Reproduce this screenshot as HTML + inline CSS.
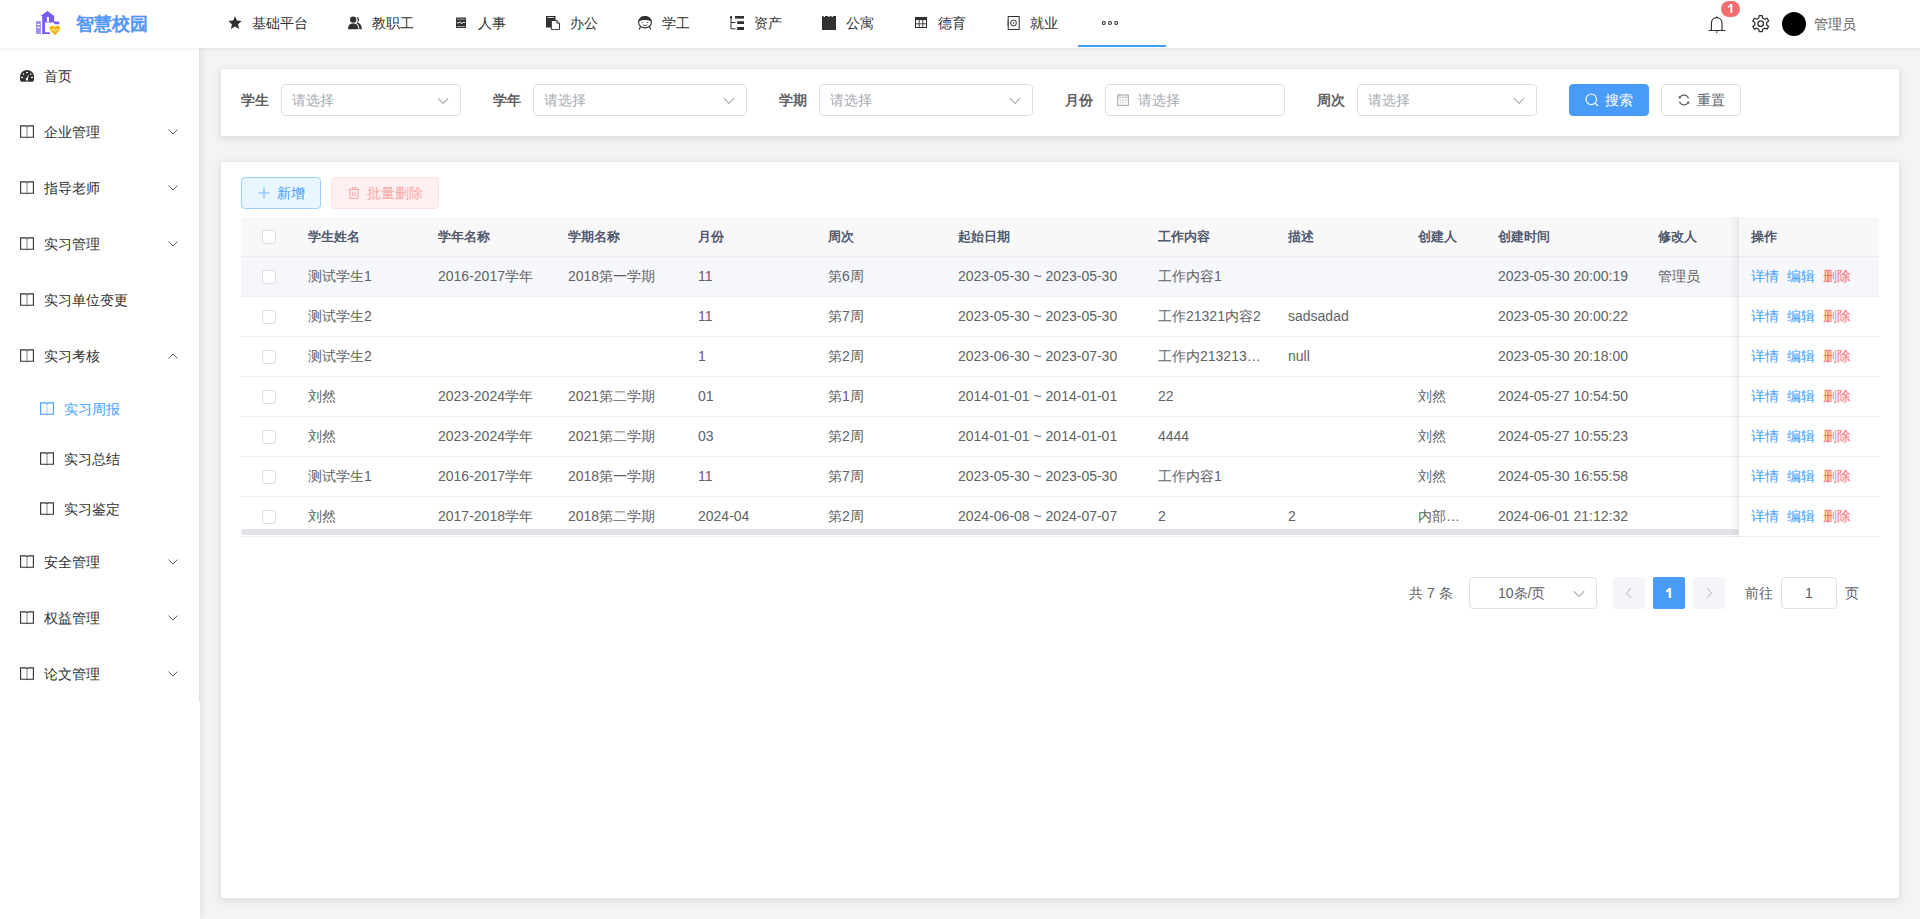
<!DOCTYPE html>
<html><head><meta charset="utf-8">
<style>
*{box-sizing:border-box;margin:0;padding:0}
html,body{width:1920px;height:919px;overflow:hidden}
body{font-family:"Liberation Sans",sans-serif;font-size:14px;color:#606266;background:#f4f4f4;position:relative}
.abs{position:absolute}
#header{left:0;top:0;width:1920px;height:48px;background:#fff;box-shadow:0 1px 4px rgba(0,21,41,.08);z-index:3}
#side{left:0;top:48px;width:200px;height:871px;background:#fff;box-shadow:2px 0 6px rgba(0,21,41,.08);z-index:2}
#menu{left:0;top:0;width:200px;height:654px;border-right:1px solid #dfe2e8}
.mi{position:absolute;left:0;width:199px;height:56px;line-height:56px;color:#303133}
.mi .t{position:absolute;left:44px;top:0}
.mi svg{position:absolute}
.card{position:absolute;background:#fff;border-radius:2px;border:1px solid #e3e6eb;box-shadow:0 2px 8px 0 rgba(0,0,0,.11)}
.lbl{position:absolute;top:84px;height:32px;line-height:32px;font-weight:bold;color:#606266}
.inp{position:absolute;top:84px;height:32px;border:1px solid #dcdfe6;border-radius:4px;background:#fff;color:#a8abb2;line-height:30px}
.btn{position:absolute;height:32px;border-radius:4px;line-height:30px;border:1px solid #dcdfe6}
.nav{position:absolute;top:0;height:48px;line-height:46px;color:#303133}
.nav svg{position:absolute;left:0;top:16px}
.nav .t{position:absolute;left:24px;top:0;white-space:nowrap}
table{border-collapse:collapse;table-layout:fixed}
.th,.td{position:absolute;white-space:nowrap;overflow:hidden}
</style></head><body>

<div id="header" class="abs">
 <svg class="abs" style="left:36px;top:11px" width="24" height="24" viewBox="0 0 24 24">
  <rect x="0" y="10.1" width="4.9" height="12.8" fill="#a18ef6"/>
  <rect x="1" y="13" width="3" height="1" fill="#fff"/><rect x="1" y="16" width="3" height="1" fill="#fff"/>
  <path d="M4.6 5.1 L11.4 0 L18.2 5.1 L18.2 10.4 L23.2 10.4 L23.2 13.2 L18.2 13.2 L18.2 11.4 L9 11.4 L9 21.3 L14 21.3 L14 22.9 L6.2 22.9 L6.2 5.1 Z" fill="#7a5af0"/>
  <rect x="10.9" y="5.7" width="2.1" height="5.2" rx="1" fill="#fff"/>
  <path d="M18.85 24.2 L14.2 19.6 C13 18.3 13.1 15.6 15.1 14.9 C16.7 14.3 18.2 15.1 18.85 16.1 C19.5 15.1 21 14.3 22.6 14.9 C24.6 15.6 24.7 18.3 23.5 19.6 Z" fill="#f8b305"/>
  <path d="M14 18.8 L16.6 18.8 L17.5 17.5 L18.8 20.2 L19.9 18.8 L23.8 18.8" stroke="#fff" stroke-width=".75" fill="none"/>
 </svg>
 <div class="abs" style="left:76px;top:0;height:48px;line-height:49px;font-size:18px;font-weight:bold;color:#4c9bf8;text-shadow:0 0 1px rgba(230,120,255,.45)">智慧校园</div>

 <div class="nav" style="left:228px"><svg width="14" height="14" viewBox="0 0 14 14"><path d="M7 0.3 L8.9 4.6 L13.6 5.1 L10.1 8.3 L11.1 13 L7 10.6 L2.9 13 L3.9 8.3 L0.4 5.1 L5.1 4.6 Z" fill="#303133"/></svg><span class="t">基础平台</span></div>
 <div class="nav" style="left:348px"><svg width="14" height="14" viewBox="0 0 14 14"><circle cx="5.2" cy="3.6" r="3.2" fill="#303133"/><path d="M0 13.3 C0 9 2 7.4 5.2 7.4 C8.4 7.4 10.4 9 10.4 13.3 Z" fill="#303133"/><path d="M8.6 0.9 C10.4 0.9 11.4 2.3 11.1 4.1 C10.9 5.4 10.2 6.2 9.4 6.6 C12 7.4 13.6 9.2 13.9 13.3 L11.4 13.3 C11.3 10.2 10.4 8.3 8.6 7.3 C9.5 6.3 9.9 5 9.8 3.6 C9.7 2.4 9.2 1.5 8.6 0.9 Z" fill="#303133"/></svg><span class="t">教职工</span></div>
 <div class="nav" style="left:454px"><svg width="14" height="14" viewBox="0 0 14 14"><rect x="2" y="1.5" width="10" height="10.5" fill="#303133"/><rect x="2.8" y="2.7" width="8.4" height=".8" fill="#fff" opacity=".7"/><rect x="2.8" y="10.2" width="8.4" height=".8" fill="#fff" opacity=".7"/><path d="M2.8 6.9 L5 6.9 L6.2 5.6 L7.6 7.9 L8.8 6.4 L11.2 6.4" stroke="#fff" stroke-width=".9" fill="none"/></svg><span class="t">人事</span></div>
 <div class="nav" style="left:546px"><svg width="14" height="14" viewBox="0 0 14 14"><rect x="0" y="0" width="9.5" height="11.5" fill="#303133"/><rect x="1.5" y="1" width="6.3" height="1" fill="#fff" opacity=".8"/><path d="M5.3 4.5 L10.8 4.5 L13.5 7.2 L13.5 13.6 L5.3 13.6 Z" fill="#fff" stroke="#303133" stroke-width="1"/><path d="M10.8 4.5 L10.8 7.2 L13.5 7.2" fill="none" stroke="#303133" stroke-width=".9"/></svg><span class="t">办公</span></div>
 <div class="nav" style="left:638px"><svg width="14" height="14" viewBox="0 0 14 14"><ellipse cx="7" cy="6.2" rx="6.4" ry="5.7" fill="none" stroke="#303133" stroke-width="1.1"/><path d="M0.7 5.6 C1.2 1.8 4 0.5 7 0.5 C10 0.5 12.8 1.8 13.3 5.6 C11 3.4 3 3.4 0.7 5.6 Z" fill="#303133"/><circle cx="4.2" cy="6.5" r=".6" fill="#303133"/><circle cx="9.8" cy="6.5" r=".6" fill="#303133"/><path d="M4.8 8.6 C6 9.8 8 9.8 9.2 8.6" fill="none" stroke="#303133" stroke-width=".8"/><path d="M2.6 10.6 L1.2 13.6 M11.4 10.6 L12.8 13.6" stroke="#303133" stroke-width="1.1"/></svg><span class="t">学工</span></div>
 <div class="nav" style="left:730px"><svg width="14" height="14" viewBox="0 0 14 14"><rect x="0" y="0" width="2" height="2.8" rx=".8" fill="#303133"/><path d="M1 2.5 L1 12.8 L5.5 12.8 M1 6.5 L5.5 6.5" fill="none" stroke="#303133" stroke-width="1"/><rect x="5" y="0" width="9" height="2.6" fill="#303133"/><rect x="7.2" y="5.2" width="6.8" height="2.8" fill="#303133"/><rect x="7.2" y="11" width="6.8" height="3" fill="#303133"/></svg><span class="t">资产</span></div>
 <div class="nav" style="left:822px"><svg width="14" height="14" viewBox="0 0 14 14"><path d="M0 0 L1.6 0 L1.6 1 L3 1 L3 0 L6.2 0 L6.2 1 L7.6 1 L7.6 0 L9.6 0 L9.6 1 L11 1 L11 0 L14 0 L14 14 L0 14 Z" fill="#303133"/></svg><span class="t">公寓</span></div>
 <div class="nav" style="left:915px"><svg width="12" height="12" viewBox="0 0 12 12" style="top:17px"><rect x=".5" y=".5" width="11" height="10" fill="none" stroke="#303133" stroke-width="1"/><rect x=".5" y=".5" width="11" height="2.6" fill="#303133"/><path d="M4.2 3 L4.2 10.5 M7.8 3 L7.8 10.5 M.5 6.8 L11.5 6.8" stroke="#303133" stroke-width=".9"/></svg><span class="t" style="left:23px">德育</span></div>
 <div class="nav" style="left:1007px"><svg width="13" height="14" viewBox="0 0 13 14"><rect x="1.2" y=".5" width="11" height="13" fill="none" stroke="#303133" stroke-width="1"/><circle cx="6.5" cy="7" r="2.9" fill="none" stroke="#303133" stroke-width="1"/><circle cx="6.5" cy="7" r=".8" fill="#303133"/><path d="M0 5 L2 5 M0 7 L2 7 M0 9 L2 9" stroke="#303133" stroke-width=".7"/></svg><span class="t" style="left:23px">就业</span></div>
 <div class="abs" style="left:1078px;top:45px;width:88px;height:2px;background:#409eff"></div>
 <svg class="abs" style="left:1101px;top:20px" width="18" height="6" viewBox="0 0 18 6"><circle cx="2.8" cy="3" r="1.45" fill="none" stroke="#303133" stroke-width="1.1"/><circle cx="9" cy="3" r="1.45" fill="none" stroke="#303133" stroke-width="1.1"/><circle cx="15.2" cy="3" r="1.45" fill="none" stroke="#303133" stroke-width="1.1"/></svg>

 <svg class="abs" style="left:1707px;top:15px" width="20" height="20" viewBox="0 0 20 20"><path d="M1.5 15.4 Q1.5 14.9 2.2 14.9 L17.8 14.9 Q18.5 14.9 18.5 15.4 Q18.5 15.9 17.8 15.9 L2.2 15.9 Q1.5 15.9 1.5 15.4 Z" fill="#303133"/><path d="M4.4 15 L4.4 8.6 C4.4 4.8 6.8 2.6 9.7 2.6 C12.6 2.6 15 4.8 15 8.6 L15 15" fill="none" stroke="#303133" stroke-width="1.15"/><path d="M8.6 2.8 L9.7 1 L10.8 2.8 Z" fill="#303133"/><path d="M8.3 16.4 L11.1 16.4 L9.7 18.6 Z" fill="#606266"/></svg>
 <div class="abs" style="left:1721px;top:1px;width:19px;height:16px;border-radius:8px;background:#f56c6c"><svg class="abs" style="left:0;top:0" width="19" height="16" viewBox="0 0 19 16"><path d="M9.2 2.9 L11.3 2.9 L11.3 12.1 L9.4 12.1 L9.4 5.6 Q8.3 6.5 6.9 6.9 L6.9 5.2 Q8.5 4.5 9.2 2.9 Z" fill="#fff"/></svg></div>
 <svg class="abs" style="left:1750px;top:12.5px" width="21.4" height="21.4" viewBox="0 0 20 20"><path d="M8.6 1.8 L11.4 1.8 L11.9 4.2 L13.6 5.1 L15.9 4.2 L17.4 6.7 L15.5 8.3 L15.5 10.3 L17.4 11.9 L15.9 14.4 L13.6 13.5 L11.9 14.5 L11.4 16.8 L8.6 16.8 L8.1 14.5 L6.4 13.5 L4.1 14.4 L2.6 11.9 L4.5 10.3 L4.5 8.3 L2.6 6.7 L4.1 4.2 L6.4 5.1 L8.1 4.2 Z" transform="translate(0 .7)" fill="none" stroke="#303133" stroke-width="1.2" stroke-linejoin="round"/><circle cx="10" cy="10" r="2.6" fill="none" stroke="#303133" stroke-width="1.2"/></svg>
 <div class="abs" style="left:1782px;top:12px;width:24px;height:24px;border-radius:50%;background:#000"></div>
 <div class="abs" style="left:1814px;top:1px;height:48px;line-height:47px;color:#606266">管理员</div>
</div>

<div id="side" class="abs">
 <div id="menu" class="abs">
<div class="mi" style="top:0"><svg width="14" height="12" viewBox="0 0 14 12" style="left:20px;top:22px"><path d="M0 7 C0 3.1 3.1 0 7 0 C10.9 0 14 3.1 14 7 L14 9.6 Q14 11.8 12.2 11.8 L1.8 11.8 Q0 11.8 0 9.6 Z" fill="#303133"/><rect x="6.1" y="2" width="1.9" height="1.1" fill="#fff"/><ellipse cx="3.5" cy="4" rx=".7" ry=".85" fill="#fff"/><ellipse cx="10.7" cy="4" rx=".7" ry=".85" fill="#fff"/><rect x="1.1" y="6.9" width="2" height="1.2" fill="#fff"/><rect x="11" y="6.9" width="2" height="1.2" fill="#fff"/><circle cx="6.9" cy="9.1" r="1.2" fill="#fff"/><path d="M6.3 8.6 L9.1 4.1 L7.7 9.3 Z" fill="#fff"/><rect x="6.2" y="10.2" width="1.4" height="1.6" fill="#fff" opacity=".6"/></svg><span class="t">首页</span></div>
<div class="mi" style="top:56px"><svg width="16" height="16" viewBox="0 0 16 16" style="left:19px;top:20px"><path d="M1.6 5.1 L6.9 5.1 L8 5.9 L9.1 5.1 L14.4 5.1 L14.4 16.5 L1.6 16.5 Z" transform="translate(0 -3.2)" fill="none" stroke="#303133" stroke-width="1.1" stroke-linejoin="miter"/><path d="M8 2.8 L8 13.3" stroke="#909399" stroke-width="1.1"/><path d="M7 13.2 L8 14.6 L9 13.2 Z" fill="#303133"/></svg><span class="t">企业管理</span><svg width="10" height="6" viewBox="0 0 10 6" style="left:168px;top:25px"><path d="M.5 .5 L5 5 L9.5 .5" fill="none" stroke="#606266" stroke-width="1"/></svg></div>
<div class="mi" style="top:112px"><svg width="16" height="16" viewBox="0 0 16 16" style="left:19px;top:20px"><path d="M1.6 5.1 L6.9 5.1 L8 5.9 L9.1 5.1 L14.4 5.1 L14.4 16.5 L1.6 16.5 Z" transform="translate(0 -3.2)" fill="none" stroke="#303133" stroke-width="1.1" stroke-linejoin="miter"/><path d="M8 2.8 L8 13.3" stroke="#909399" stroke-width="1.1"/><path d="M7 13.2 L8 14.6 L9 13.2 Z" fill="#303133"/></svg><span class="t">指导老师</span><svg width="10" height="6" viewBox="0 0 10 6" style="left:168px;top:25px"><path d="M.5 .5 L5 5 L9.5 .5" fill="none" stroke="#606266" stroke-width="1"/></svg></div>
<div class="mi" style="top:168px"><svg width="16" height="16" viewBox="0 0 16 16" style="left:19px;top:20px"><path d="M1.6 5.1 L6.9 5.1 L8 5.9 L9.1 5.1 L14.4 5.1 L14.4 16.5 L1.6 16.5 Z" transform="translate(0 -3.2)" fill="none" stroke="#303133" stroke-width="1.1" stroke-linejoin="miter"/><path d="M8 2.8 L8 13.3" stroke="#909399" stroke-width="1.1"/><path d="M7 13.2 L8 14.6 L9 13.2 Z" fill="#303133"/></svg><span class="t">实习管理</span><svg width="10" height="6" viewBox="0 0 10 6" style="left:168px;top:25px"><path d="M.5 .5 L5 5 L9.5 .5" fill="none" stroke="#606266" stroke-width="1"/></svg></div>
<div class="mi" style="top:224px"><svg width="16" height="16" viewBox="0 0 16 16" style="left:19px;top:20px"><path d="M1.6 5.1 L6.9 5.1 L8 5.9 L9.1 5.1 L14.4 5.1 L14.4 16.5 L1.6 16.5 Z" transform="translate(0 -3.2)" fill="none" stroke="#303133" stroke-width="1.1" stroke-linejoin="miter"/><path d="M8 2.8 L8 13.3" stroke="#909399" stroke-width="1.1"/><path d="M7 13.2 L8 14.6 L9 13.2 Z" fill="#303133"/></svg><span class="t">实习单位变更</span></div>
<div class="mi" style="top:280px"><svg width="16" height="16" viewBox="0 0 16 16" style="left:19px;top:20px"><path d="M1.6 5.1 L6.9 5.1 L8 5.9 L9.1 5.1 L14.4 5.1 L14.4 16.5 L1.6 16.5 Z" transform="translate(0 -3.2)" fill="none" stroke="#303133" stroke-width="1.1" stroke-linejoin="miter"/><path d="M8 2.8 L8 13.3" stroke="#909399" stroke-width="1.1"/><path d="M7 13.2 L8 14.6 L9 13.2 Z" fill="#303133"/></svg><span class="t">实习考核</span><svg width="10" height="6" viewBox="0 0 10 6" style="left:168px;top:25px"><path d="M.5 5.5 L5 1 L9.5 5.5" fill="none" stroke="#606266" stroke-width="1"/></svg></div>
<div class="mi" style="top:336px;height:50px;line-height:50px;color:#409eff"><svg width="16" height="16" viewBox="0 0 16 16" style="left:39px;top:17px"><path d="M1.6 5.1 L6.9 5.1 L8 5.9 L9.1 5.1 L14.4 5.1 L14.4 16.5 L1.6 16.5 Z" transform="translate(0 -3.2)" fill="none" stroke="#409eff" stroke-width="1.1" stroke-linejoin="miter"/><path d="M8 2.8 L8 13.3" stroke="#a0cfff" stroke-width="1.1"/><path d="M7 13.2 L8 14.6 L9 13.2 Z" fill="#409eff"/></svg><span class="t" style="left:64px">实习周报</span></div>
<div class="mi" style="top:386px;height:50px;line-height:50px;color:#303133"><svg width="16" height="16" viewBox="0 0 16 16" style="left:39px;top:17px"><path d="M1.6 5.1 L6.9 5.1 L8 5.9 L9.1 5.1 L14.4 5.1 L14.4 16.5 L1.6 16.5 Z" transform="translate(0 -3.2)" fill="none" stroke="#303133" stroke-width="1.1" stroke-linejoin="miter"/><path d="M8 2.8 L8 13.3" stroke="#909399" stroke-width="1.1"/><path d="M7 13.2 L8 14.6 L9 13.2 Z" fill="#303133"/></svg><span class="t" style="left:64px">实习总结</span></div>
<div class="mi" style="top:436px;height:50px;line-height:50px;color:#303133"><svg width="16" height="16" viewBox="0 0 16 16" style="left:39px;top:17px"><path d="M1.6 5.1 L6.9 5.1 L8 5.9 L9.1 5.1 L14.4 5.1 L14.4 16.5 L1.6 16.5 Z" transform="translate(0 -3.2)" fill="none" stroke="#303133" stroke-width="1.1" stroke-linejoin="miter"/><path d="M8 2.8 L8 13.3" stroke="#909399" stroke-width="1.1"/><path d="M7 13.2 L8 14.6 L9 13.2 Z" fill="#303133"/></svg><span class="t" style="left:64px">实习鉴定</span></div>
<div class="mi" style="top:486px"><svg width="16" height="16" viewBox="0 0 16 16" style="left:19px;top:20px"><path d="M1.6 5.1 L6.9 5.1 L8 5.9 L9.1 5.1 L14.4 5.1 L14.4 16.5 L1.6 16.5 Z" transform="translate(0 -3.2)" fill="none" stroke="#303133" stroke-width="1.1" stroke-linejoin="miter"/><path d="M8 2.8 L8 13.3" stroke="#909399" stroke-width="1.1"/><path d="M7 13.2 L8 14.6 L9 13.2 Z" fill="#303133"/></svg><span class="t">安全管理</span><svg width="10" height="6" viewBox="0 0 10 6" style="left:168px;top:25px"><path d="M.5 .5 L5 5 L9.5 .5" fill="none" stroke="#606266" stroke-width="1"/></svg></div>
<div class="mi" style="top:542px"><svg width="16" height="16" viewBox="0 0 16 16" style="left:19px;top:20px"><path d="M1.6 5.1 L6.9 5.1 L8 5.9 L9.1 5.1 L14.4 5.1 L14.4 16.5 L1.6 16.5 Z" transform="translate(0 -3.2)" fill="none" stroke="#303133" stroke-width="1.1" stroke-linejoin="miter"/><path d="M8 2.8 L8 13.3" stroke="#909399" stroke-width="1.1"/><path d="M7 13.2 L8 14.6 L9 13.2 Z" fill="#303133"/></svg><span class="t">权益管理</span><svg width="10" height="6" viewBox="0 0 10 6" style="left:168px;top:25px"><path d="M.5 .5 L5 5 L9.5 .5" fill="none" stroke="#606266" stroke-width="1"/></svg></div>
<div class="mi" style="top:598px"><svg width="16" height="16" viewBox="0 0 16 16" style="left:19px;top:20px"><path d="M1.6 5.1 L6.9 5.1 L8 5.9 L9.1 5.1 L14.4 5.1 L14.4 16.5 L1.6 16.5 Z" transform="translate(0 -3.2)" fill="none" stroke="#303133" stroke-width="1.1" stroke-linejoin="miter"/><path d="M8 2.8 L8 13.3" stroke="#909399" stroke-width="1.1"/><path d="M7 13.2 L8 14.6 L9 13.2 Z" fill="#303133"/></svg><span class="t">论文管理</span><svg width="10" height="6" viewBox="0 0 10 6" style="left:168px;top:25px"><path d="M.5 .5 L5 5 L9.5 .5" fill="none" stroke="#606266" stroke-width="1"/></svg></div>
</div>
</div>

<div class="card" style="left:220px;top:68px;width:1680px;height:69px"></div>
<div class="lbl" style="left:241px">学生</div><div class="inp" style="left:281px;width:180px"><span class="abs" style="left:10px;top:0">请选择</span><svg class="abs" width="12" height="8" viewBox="0 0 12 8" style="left:155px;top:11.5px"><path d="M.8 1.2 L6 6.4 L11.2 1.2" fill="none" stroke="#a8abb2" stroke-width="1.1"/></svg></div>
<div class="lbl" style="left:493px">学年</div><div class="inp" style="left:533px;width:214px"><span class="abs" style="left:10px;top:0">请选择</span><svg class="abs" width="12" height="8" viewBox="0 0 12 8" style="left:189px;top:11.5px"><path d="M.8 1.2 L6 6.4 L11.2 1.2" fill="none" stroke="#a8abb2" stroke-width="1.1"/></svg></div>
<div class="lbl" style="left:779px">学期</div><div class="inp" style="left:819px;width:214px"><span class="abs" style="left:10px;top:0">请选择</span><svg class="abs" width="12" height="8" viewBox="0 0 12 8" style="left:189px;top:11.5px"><path d="M.8 1.2 L6 6.4 L11.2 1.2" fill="none" stroke="#a8abb2" stroke-width="1.1"/></svg></div>
<div class="lbl" style="left:1065px">月份</div>
<div class="inp" style="left:1105px;width:180px"><svg class="abs" width="12" height="12" viewBox="0 0 12 12" style="left:11px;top:8.7px"><rect x=".7" y="1" width="10.6" height="10.3" fill="none" stroke="#a0a3aa" stroke-width="1"/><path d="M.7 3.2 L11.3 3.2" stroke="#b4b7bd" stroke-width="1"/><path d="M2.9 0 L2.9 1.2 M9.3 0 L9.3 1.2" stroke="#a0a3aa" stroke-width=".9"/><path d="M2.6 6 h1.4 M5.2 6 h1.4 M8 6 h1.4 M2.9 8.7 h.9 M5.4 8.7 h1.1 M8.3 8.7 h.9" stroke="#a0a3aa" stroke-width=".9"/></svg><span class="abs" style="left:32px;top:0">请选择</span></div>
<div class="lbl" style="left:1317px">周次</div><div class="inp" style="left:1357px;width:180px"><span class="abs" style="left:10px;top:0">请选择</span><svg class="abs" width="12" height="8" viewBox="0 0 12 8" style="left:155px;top:11.5px"><path d="M.8 1.2 L6 6.4 L11.2 1.2" fill="none" stroke="#a8abb2" stroke-width="1.1"/></svg></div>
<div class="btn" style="left:1569px;top:84px;width:80px;background:#499bf8;border-color:#499bf8;color:#fff"><svg class="abs" width="14" height="14" viewBox="0 0 14 14" style="left:15px;top:8px"><circle cx="6.3" cy="6.3" r="5.3" fill="none" stroke="#fff" stroke-width="1.1"/><path d="M10.2 10.2 L13 13" stroke="#fff" stroke-width="1.1"/></svg><span class="abs" style="left:35px;top:0">搜索</span></div>
<div class="btn" style="left:1661px;top:84px;width:80px;background:#fff;color:#606266"><svg class="abs" width="14" height="14" viewBox="0 0 14 14" style="left:15px;top:8px"><path d="M11.6 5.2 A5 5 0 0 0 2.6 4.8 M2.4 8.8 A5 5 0 0 0 11.4 9.2" fill="none" stroke="#606266" stroke-width="1.1"/><path d="M1.6 2.6 L1.8 5.6 L4.6 5.2 Z M12.4 11.4 L12.2 8.4 L9.4 8.8 Z" fill="#606266"/></svg><span class="abs" style="left:35px;top:0">重置</span></div>

<div class="card" style="left:220px;top:161px;width:1680px;height:738px"></div>

<div class="abs" style="left:241px;top:177px;width:80px;height:32px;border:1px solid #a0cfff;background:#e9f5ff;border-radius:4px;color:#409eff;line-height:30px"><svg class="abs" width="12" height="12" viewBox="0 0 12 12" style="left:16px;top:9px"><path d="M6 0.5 L6 11.5 M0.5 6 L11.5 6" stroke="#79bbff" stroke-width="1.2"/></svg><span class="abs" style="left:35px;top:0">新增</span></div>
<div class="abs" style="left:331px;top:177px;width:108px;height:32px;border:1px solid #fde2e2;background:#fef0f0;border-radius:4px;color:#f9a7a7;line-height:30px"><svg class="abs" width="12" height="14" viewBox="0 0 12 14" style="left:16px;top:8px"><path d="M.6 3.3 L11.4 3.3 M4.2 3.3 L4.2 1.6 L7.8 1.6 L7.8 3.3 M1.9 3.3 L1.9 12.4 L10.1 12.4 L10.1 3.3 M4.8 5.6 L4.8 10.2 M7.2 5.6 L7.2 10.2" fill="none" stroke="#f9a7a7" stroke-width="1"/></svg><span class="abs" style="left:35px;top:0">批量删除</span></div>
<div class="abs" style="left:241px;top:217px;width:1638px;height:40px;background:#f8f8f9;border-bottom:1px solid #ebeef5"></div>
<div class="abs" style="left:262px;top:230px;width:14px;height:14px;border:1px solid #dcdfe6;border-radius:2px;background:#fff"></div>
<div class="th abs" style="left:308px;top:217px;line-height:39px;font-weight:bold;color:#515a6e;font-size:13px">学生姓名</div>
<div class="th abs" style="left:438px;top:217px;line-height:39px;font-weight:bold;color:#515a6e;font-size:13px">学年名称</div>
<div class="th abs" style="left:568px;top:217px;line-height:39px;font-weight:bold;color:#515a6e;font-size:13px">学期名称</div>
<div class="th abs" style="left:698px;top:217px;line-height:39px;font-weight:bold;color:#515a6e;font-size:13px">月份</div>
<div class="th abs" style="left:828px;top:217px;line-height:39px;font-weight:bold;color:#515a6e;font-size:13px">周次</div>
<div class="th abs" style="left:958px;top:217px;line-height:39px;font-weight:bold;color:#515a6e;font-size:13px">起始日期</div>
<div class="th abs" style="left:1158px;top:217px;line-height:39px;font-weight:bold;color:#515a6e;font-size:13px">工作内容</div>
<div class="th abs" style="left:1288px;top:217px;line-height:39px;font-weight:bold;color:#515a6e;font-size:13px">描述</div>
<div class="th abs" style="left:1418px;top:217px;line-height:39px;font-weight:bold;color:#515a6e;font-size:13px">创建人</div>
<div class="th abs" style="left:1498px;top:217px;line-height:39px;font-weight:bold;color:#515a6e;font-size:13px">创建时间</div>
<div class="th abs" style="left:1658px;top:217px;line-height:39px;font-weight:bold;color:#515a6e;font-size:13px">修改人</div>
<div class="abs" style="left:241px;top:257px;width:1638px;height:40px;background:#f5f7fa;border-bottom:1px solid #ebeef5"></div>
<div class="abs" style="left:262px;top:270px;width:14px;height:14px;border:1px solid #dcdfe6;border-radius:2px;background:#fff"></div>
<div class="td abs" style="left:308px;top:257px;line-height:39px">测试学生1</div>
<div class="td abs" style="left:438px;top:257px;line-height:39px">2016-2017学年</div>
<div class="td abs" style="left:568px;top:257px;line-height:39px">2018第一学期</div>
<div class="td abs" style="left:698px;top:257px;line-height:39px">11</div>
<div class="td abs" style="left:828px;top:257px;line-height:39px">第6周</div>
<div class="td abs" style="left:958px;top:257px;line-height:39px">2023-05-30 ~ 2023-05-30</div>
<div class="td abs" style="left:1158px;top:257px;line-height:39px">工作内容1</div>
<div class="td abs" style="left:1498px;top:257px;line-height:39px">2023-05-30 20:00:19</div>
<div class="td abs" style="left:1658px;top:257px;line-height:39px">管理员</div>
<div class="abs" style="left:241px;top:297px;width:1638px;height:40px;background:#fff;border-bottom:1px solid #ebeef5"></div>
<div class="abs" style="left:262px;top:310px;width:14px;height:14px;border:1px solid #dcdfe6;border-radius:2px;background:#fff"></div>
<div class="td abs" style="left:308px;top:297px;line-height:39px">测试学生2</div>
<div class="td abs" style="left:698px;top:297px;line-height:39px">11</div>
<div class="td abs" style="left:828px;top:297px;line-height:39px">第7周</div>
<div class="td abs" style="left:958px;top:297px;line-height:39px">2023-05-30 ~ 2023-05-30</div>
<div class="td abs" style="left:1158px;top:297px;line-height:39px">工作21321内容2</div>
<div class="td abs" style="left:1288px;top:297px;line-height:39px">sadsadad</div>
<div class="td abs" style="left:1498px;top:297px;line-height:39px">2023-05-30 20:00:22</div>
<div class="abs" style="left:241px;top:337px;width:1638px;height:40px;background:#fff;border-bottom:1px solid #ebeef5"></div>
<div class="abs" style="left:262px;top:350px;width:14px;height:14px;border:1px solid #dcdfe6;border-radius:2px;background:#fff"></div>
<div class="td abs" style="left:308px;top:337px;line-height:39px">测试学生2</div>
<div class="td abs" style="left:698px;top:337px;line-height:39px">1</div>
<div class="td abs" style="left:828px;top:337px;line-height:39px">第2周</div>
<div class="td abs" style="left:958px;top:337px;line-height:39px">2023-06-30 ~ 2023-07-30</div>
<div class="td abs" style="left:1158px;top:337px;line-height:39px">工作内213213…</div>
<div class="td abs" style="left:1288px;top:337px;line-height:39px">null</div>
<div class="td abs" style="left:1498px;top:337px;line-height:39px">2023-05-30 20:18:00</div>
<div class="abs" style="left:241px;top:377px;width:1638px;height:40px;background:#fff;border-bottom:1px solid #ebeef5"></div>
<div class="abs" style="left:262px;top:390px;width:14px;height:14px;border:1px solid #dcdfe6;border-radius:2px;background:#fff"></div>
<div class="td abs" style="left:308px;top:377px;line-height:39px">刘然</div>
<div class="td abs" style="left:438px;top:377px;line-height:39px">2023-2024学年</div>
<div class="td abs" style="left:568px;top:377px;line-height:39px">2021第二学期</div>
<div class="td abs" style="left:698px;top:377px;line-height:39px">01</div>
<div class="td abs" style="left:828px;top:377px;line-height:39px">第1周</div>
<div class="td abs" style="left:958px;top:377px;line-height:39px">2014-01-01 ~ 2014-01-01</div>
<div class="td abs" style="left:1158px;top:377px;line-height:39px">22</div>
<div class="td abs" style="left:1418px;top:377px;line-height:39px">刘然</div>
<div class="td abs" style="left:1498px;top:377px;line-height:39px">2024-05-27 10:54:50</div>
<div class="abs" style="left:241px;top:417px;width:1638px;height:40px;background:#fff;border-bottom:1px solid #ebeef5"></div>
<div class="abs" style="left:262px;top:430px;width:14px;height:14px;border:1px solid #dcdfe6;border-radius:2px;background:#fff"></div>
<div class="td abs" style="left:308px;top:417px;line-height:39px">刘然</div>
<div class="td abs" style="left:438px;top:417px;line-height:39px">2023-2024学年</div>
<div class="td abs" style="left:568px;top:417px;line-height:39px">2021第二学期</div>
<div class="td abs" style="left:698px;top:417px;line-height:39px">03</div>
<div class="td abs" style="left:828px;top:417px;line-height:39px">第2周</div>
<div class="td abs" style="left:958px;top:417px;line-height:39px">2014-01-01 ~ 2014-01-01</div>
<div class="td abs" style="left:1158px;top:417px;line-height:39px">4444</div>
<div class="td abs" style="left:1418px;top:417px;line-height:39px">刘然</div>
<div class="td abs" style="left:1498px;top:417px;line-height:39px">2024-05-27 10:55:23</div>
<div class="abs" style="left:241px;top:457px;width:1638px;height:40px;background:#fff;border-bottom:1px solid #ebeef5"></div>
<div class="abs" style="left:262px;top:470px;width:14px;height:14px;border:1px solid #dcdfe6;border-radius:2px;background:#fff"></div>
<div class="td abs" style="left:308px;top:457px;line-height:39px">测试学生1</div>
<div class="td abs" style="left:438px;top:457px;line-height:39px">2016-2017学年</div>
<div class="td abs" style="left:568px;top:457px;line-height:39px">2018第一学期</div>
<div class="td abs" style="left:698px;top:457px;line-height:39px">11</div>
<div class="td abs" style="left:828px;top:457px;line-height:39px">第7周</div>
<div class="td abs" style="left:958px;top:457px;line-height:39px">2023-05-30 ~ 2023-05-30</div>
<div class="td abs" style="left:1158px;top:457px;line-height:39px">工作内容1</div>
<div class="td abs" style="left:1418px;top:457px;line-height:39px">刘然</div>
<div class="td abs" style="left:1498px;top:457px;line-height:39px">2024-05-30 16:55:58</div>
<div class="abs" style="left:241px;top:497px;width:1638px;height:40px;background:#fff;border-bottom:1px solid #ebeef5"></div>
<div class="abs" style="left:262px;top:510px;width:14px;height:14px;border:1px solid #dcdfe6;border-radius:2px;background:#fff"></div>
<div class="td abs" style="left:308px;top:497px;line-height:39px">刘然</div>
<div class="td abs" style="left:438px;top:497px;line-height:39px">2017-2018学年</div>
<div class="td abs" style="left:568px;top:497px;line-height:39px">2018第二学期</div>
<div class="td abs" style="left:698px;top:497px;line-height:39px">2024-04</div>
<div class="td abs" style="left:828px;top:497px;line-height:39px">第2周</div>
<div class="td abs" style="left:958px;top:497px;line-height:39px">2024-06-08 ~ 2024-07-07</div>
<div class="td abs" style="left:1158px;top:497px;line-height:39px">2</div>
<div class="td abs" style="left:1288px;top:497px;line-height:39px">2</div>
<div class="td abs" style="left:1418px;top:497px;line-height:39px">内部…</div>
<div class="td abs" style="left:1498px;top:497px;line-height:39px">2024-06-01 21:12:32</div>
<div class="abs" style="left:241px;top:529px;width:1498px;height:6px;background:#e2e3e6;border-radius:3px"></div>
<div class="abs" style="left:1739px;top:217px;width:140px;height:320px;background:transparent;z-index:1">
<div class="abs" style="left:-10px;top:0;width:10px;height:320px;background:linear-gradient(to right,rgba(0,0,0,0),rgba(0,0,0,.035) 70%,rgba(0,0,0,.07))"></div><div class="abs" style="left:0;top:0;width:140px;height:40px;background:#f8f8f9;border-bottom:1px solid #ebeef5"></div>
<div class="abs" style="left:12px;top:0;line-height:39px;font-weight:bold;color:#515a6e;font-size:13px">操作</div>
<div class="abs" style="left:0;top:40px;width:140px;height:40px;background:#f5f7fa;border-bottom:1px solid #ebeef5;line-height:39px"><span class="abs" style="left:12px;color:#409eff">详情</span><span class="abs" style="left:48px;color:#409eff">编辑</span><span class="abs" style="left:84px;color:#f56c6c">删除</span></div>
<div class="abs" style="left:0;top:80px;width:140px;height:40px;background:#fff;border-bottom:1px solid #ebeef5;line-height:39px"><span class="abs" style="left:12px;color:#409eff">详情</span><span class="abs" style="left:48px;color:#409eff">编辑</span><span class="abs" style="left:84px;color:#f56c6c">删除</span></div>
<div class="abs" style="left:0;top:120px;width:140px;height:40px;background:#fff;border-bottom:1px solid #ebeef5;line-height:39px"><span class="abs" style="left:12px;color:#409eff">详情</span><span class="abs" style="left:48px;color:#409eff">编辑</span><span class="abs" style="left:84px;color:#f56c6c">删除</span></div>
<div class="abs" style="left:0;top:160px;width:140px;height:40px;background:#fff;border-bottom:1px solid #ebeef5;line-height:39px"><span class="abs" style="left:12px;color:#409eff">详情</span><span class="abs" style="left:48px;color:#409eff">编辑</span><span class="abs" style="left:84px;color:#f56c6c">删除</span></div>
<div class="abs" style="left:0;top:200px;width:140px;height:40px;background:#fff;border-bottom:1px solid #ebeef5;line-height:39px"><span class="abs" style="left:12px;color:#409eff">详情</span><span class="abs" style="left:48px;color:#409eff">编辑</span><span class="abs" style="left:84px;color:#f56c6c">删除</span></div>
<div class="abs" style="left:0;top:240px;width:140px;height:40px;background:#fff;border-bottom:1px solid #ebeef5;line-height:39px"><span class="abs" style="left:12px;color:#409eff">详情</span><span class="abs" style="left:48px;color:#409eff">编辑</span><span class="abs" style="left:84px;color:#f56c6c">删除</span></div>
<div class="abs" style="left:0;top:280px;width:140px;height:40px;background:#fff;border-bottom:1px solid #ebeef5;line-height:39px"><span class="abs" style="left:12px;color:#409eff">详情</span><span class="abs" style="left:48px;color:#409eff">编辑</span><span class="abs" style="left:84px;color:#f56c6c">删除</span></div>
</div>
<div class="abs" style="left:1409px;top:577px;line-height:32px;color:#606266;word-spacing:0">共 7 条</div>
<div class="inp" style="left:1469px;width:128px;top:577px;color:#606266"><span class="abs" style="left:28px;top:0">10条/页</span><svg class="abs" width="12" height="8" viewBox="0 0 12 8" style="left:103px;top:11.5px"><path d="M.8 1.2 L6 6.4 L11.2 1.2" fill="none" stroke="#a8abb2" stroke-width="1.1"/></svg></div>
<div class="abs" style="left:1613px;top:577px;width:32px;height:32px;background:#f4f5f9;border-radius:2px"><svg class="abs" width="8" height="12" viewBox="0 0 8 12" style="left:12px;top:10px"><path d="M6 1 L1.5 6 L6 11" fill="none" stroke="#c0c4cc" stroke-width="1.1"/></svg></div>
<div class="abs" style="left:1653px;top:577px;width:32px;height:32px;background:#499bf8;border-radius:2px"><svg class="abs" style="left:0;top:0" width="32" height="32" viewBox="0 0 32 32"><path d="M15.4 11 L18.1 11 L18.1 21 L15.7 21 L15.7 14.2 Q14.4 15.1 13 15.5 L13 13.6 Q14.8 12.8 15.4 11 Z" fill="#fff"/></svg></div>
<div class="abs" style="left:1693px;top:577px;width:32px;height:32px;background:#f4f5f9;border-radius:2px"><svg class="abs" width="8" height="12" viewBox="0 0 8 12" style="left:12px;top:10px"><path d="M2 1 L6.5 6 L2 11" fill="none" stroke="#c0c4cc" stroke-width="1.1"/></svg></div>
<div class="abs" style="left:1745px;top:577px;line-height:32px">前往</div>
<div class="inp" style="left:1781px;width:56px;top:577px;color:#606266;text-align:center">1</div>
<div class="abs" style="left:1845px;top:577px;line-height:32px">页</div>
</body></html>
